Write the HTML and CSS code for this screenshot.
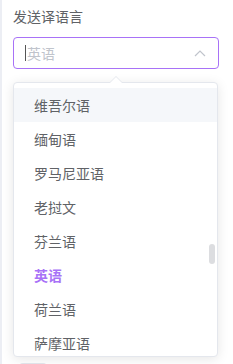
FILE: index.html
```html
<!DOCTYPE html>
<html>
<head>
    <meta charset="UTF-8">
    <title>发送译语言</title>
    <link rel="stylesheet" href="styles.css">
</head>
<body>
    <div class="panel">
        <label class="field-label">发送译语言</label>
        <div class="select-box">
            <span class="caret"></span>
            <span class="placeholder">英语</span>
            <svg class="chevron" width="12" height="8" viewBox="0 0 12 8">
                <path d="M1 7 L6 2 L11 7" fill="none" stroke="#c0c4cc" stroke-width="1.2"/>
            </svg>
        </div>
        <div class="dropdown">
            <span class="dropdown-arrow"></span>
            <ul class="options">
                <li class="option hover">维吾尔语</li>
                <li class="option">缅甸语</li>
                <li class="option">罗马尼亚语</li>
                <li class="option">老挝文</li>
                <li class="option">芬兰语</li>
                <li class="option selected">英语</li>
                <li class="option">荷兰语</li>
                <li class="option">萨摩亚语</li>
            </ul>
            <div class="thumb"></div>
        </div>
        <div class="under-btn"></div>
    </div>
</body>
</html>
```

FILE: styles.css
```css
body {
    margin: 0;
    background-color: #ffffff;
    font-family: "Noto Sans CJK SC", "Noto Sans", sans-serif;
}
.panel {
    min-height: 364px;
    box-sizing: border-box;
    border-left: 2px solid #eceef4;
    padding: 6px 15px 0 11px;
}
.field-label {
    display: block;
    font-size: 14px;
    line-height: 20px;
    color: #606266;
    margin-bottom: 11px;
}
.select-box {
    position: relative;
    display: flex;
    align-items: center;
    width: 206px;
    height: 32px;
    box-sizing: border-box;
    border: 1px solid #a872f7;
    border-radius: 4px;
    padding: 0 12px 0 11px;
}
.caret {
    width: 1px;
    height: 16px;
    background-color: #555;
    margin-right: 1px;
}
.placeholder {
    flex: 1;
    font-size: 14px;
    color: #c0c4cc;
}
.chevron {
    display: block;
}
.dropdown {
    position: relative;
    width: 205px;
    height: 275px;
    box-sizing: border-box;
    margin-top: 13px;
    border: 1px solid #e4e7ed;
    border-radius: 4px;
    background-color: #ffffff;
    box-shadow: 0 2px 12px rgba(0, 0, 0, 0.1);
}
.dropdown-arrow {
    position: absolute;
    top: -7px;
    left: 96px;
    width: 0;
    height: 0;
    border-left: 6px solid transparent;
    border-right: 6px solid transparent;
    border-bottom: 6px solid #e4e7ed;
}
.dropdown-arrow::after {
    content: "";
    position: absolute;
    top: 1px;
    left: -6px;
    border-left: 6px solid transparent;
    border-right: 6px solid transparent;
    border-bottom: 6px solid #ffffff;
}
.options {
    list-style: none;
    margin: 0;
    padding: 5px 0;
    height: 100%;
    box-sizing: border-box;
    overflow: hidden;
}
.option {
    height: 34px;
    line-height: 34px;
    padding: 0 20px;
    font-size: 14px;
    color: #606266;
}
.option.hover {
    background-color: #f5f7fa;
}
.option.selected {
    color: #a872f7;
    font-weight: bold;
}
.thumb {
    position: absolute;
    right: 2px;
    top: 161px;
    width: 6px;
    height: 20px;
    border-radius: 3px;
    background-color: #dcdde0;
}
.under-btn {
    width: 28px;
    height: 6px;
    margin: 6px 0 0 6px;
    border-top: 1px solid #e4e7ed;
    border-radius: 4px 4px 0 0;
}
```
